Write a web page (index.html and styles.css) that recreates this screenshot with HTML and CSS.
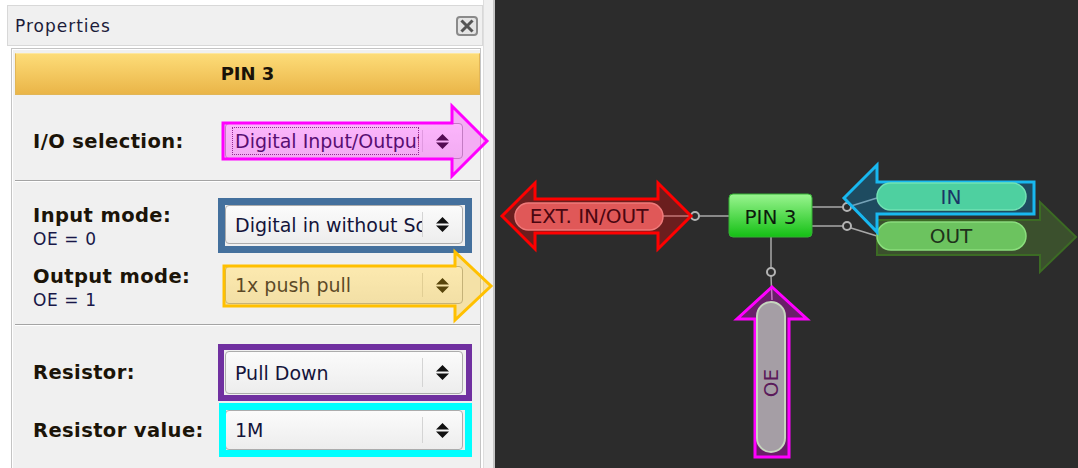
FILE: index.html
```html
<!DOCTYPE html>
<html lang="en">
<head>
    <meta charset="UTF-8">
    <title>Pin Properties</title>
    <link rel="stylesheet" href="styles.css">
</head>
<body>
    <div class="app">
        <!-- Properties dock -->
        <aside class="sidebar">
            <div class="dock-title">
                <span>Properties</span>
                <svg class="close" width="22" height="20" viewBox="0 0 22 20">
                    <rect x="1" y="1" width="20" height="18" rx="3" fill="#e4e4e4" stroke="#8a8a8a" stroke-width="2"/>
                    <path d="M6.5 5.5 L15.5 14.5 M15.5 5.5 L6.5 14.5" stroke="#555" stroke-width="3" stroke-linecap="square"/>
                </svg>
            </div>

            <div class="props">
                <div class="pin-head">PIN 3</div>

                <div class="group g1">
                    <div class="row">
                        <div class="label"><b>I/O selection:</b></div>
                        <div class="select h36">
                            <span class="value focus">Digital Input/Output</span>
                            <span class="spin"><svg width="13" height="15" viewBox="0 0 13 15"><path d="M0 6.5 L6.5 0 L13 6.5 Z M0 8.5 L6.5 15 L13 8.5 Z" fill="#111"/></svg></span>
                            <svg class="mark"><polygon points="-3,-1 226,-1 226,-18 261,17 226,52 226,35 -3,35" fill="rgba(255,0,255,0.28)" stroke="#ff00ff" stroke-width="3"/></svg>
                        </div>
                    </div>
                </div>

                <div class="group g2">
                    <div class="row r39">
                        <div class="label"><b>Input mode:</b><span>OE = 0</span></div>
                        <div class="select h39 box box-blue">
                            <span class="value">Digital in without Schmitt trigger</span>
                            <span class="spin"><svg width="13" height="15" viewBox="0 0 13 15"><path d="M0 6.5 L6.5 0 L13 6.5 Z M0 8.5 L6.5 15 L13 8.5 Z" fill="#111"/></svg></span>
                        </div>
                    </div>
                    <div class="row r38">
                        <div class="label"><b>Output mode:</b><span>OE = 1</span></div>
                        <div class="select h38">
                            <span class="value">1x push pull</span>
                            <span class="spin"><svg width="13" height="15" viewBox="0 0 13 15"><path d="M0 6.5 L6.5 0 L13 6.5 Z M0 8.5 L6.5 15 L13 8.5 Z" fill="#111"/></svg></span>
                            <svg class="mark"><polygon points="-2,-1 229,-1 229,-15 265,19 229,53 229,39 -2,39" fill="rgba(255,192,0,0.3)" stroke="#ffc000" stroke-width="3"/></svg>
                        </div>
                    </div>
                </div>

                <div class="group g3">
                    <div class="row">
                        <div class="label"><b>Resistor:</b></div>
                        <div class="select h43 box box-purple">
                            <span class="value">Pull Down</span>
                            <span class="spin"><svg width="13" height="15" viewBox="0 0 13 15"><path d="M0 6.5 L6.5 0 L13 6.5 Z M0 8.5 L6.5 15 L13 8.5 Z" fill="#111"/></svg></span>
                        </div>
                    </div>
                    <div class="row">
                        <div class="label"><b>Resistor value:</b></div>
                        <div class="select h40 box box-cyan">
                            <span class="value">1M</span>
                            <span class="spin"><svg width="13" height="15" viewBox="0 0 13 15"><path d="M0 6.5 L6.5 0 L13 6.5 Z M0 8.5 L6.5 15 L13 8.5 Z" fill="#111"/></svg></span>
                        </div>
                    </div>
                </div>
            </div>
        </aside>

        <div class="splitter"></div>

        <!-- Block diagram -->
        <main class="canvas">
            <svg class="diagram" width="583" height="468" viewBox="0 0 583 468">
                <defs>
                    <linearGradient id="green" x1="0" y1="0" x2="0" y2="1">
                        <stop offset="0" stop-color="#9af590"/>
                        <stop offset="1" stop-color="#14c014"/>
                    </linearGradient>
                </defs>

                <!-- wires -->
                <g class="wire">
                    <line x1="204" y1="216" x2="234" y2="216"/>
                    <line x1="317" y1="207" x2="348" y2="207"/>
                    <line x1="317" y1="226" x2="348" y2="226"/>
                    <line x1="356" y1="206" x2="382" y2="198"/>
                    <line x1="356" y1="228" x2="382" y2="236"/>
                    <line x1="276" y1="237" x2="276" y2="268"/>
                    <line x1="276" y1="276" x2="277" y2="300"/>
                    <line x1="168" y1="216" x2="196" y2="216"/>
                </g>
                <g class="pin">
                    <circle cx="200" cy="216" r="4"/>
                    <circle cx="352" cy="207" r="4"/>
                    <circle cx="352" cy="226" r="4"/>
                    <circle cx="276" cy="272" r="4"/>
                </g>

                <!-- EXT. IN/OUT -->
                <polygon points="7,216 40,183 40,199 163,199 163,183 196,216 163,249 163,233 40,233 40,249" fill="rgba(255,0,0,0.3)" stroke="#ff0000" stroke-width="3"/>
                <rect x="20" y="203" width="148" height="27" rx="13.5" fill="#e05858" stroke="#f07a7a" stroke-width="1.5"/>
                <text class="lbl" x="94" y="223" fill="#4a0610">EXT. IN/OUT</text>

                <!-- PIN 3 -->
                <rect x="234" y="194" width="83" height="43" rx="4" fill="url(#green)" stroke="#34b034" stroke-width="1"/>
                <text class="lbl" x="275.5" y="224" fill="#0c1a0c">PIN 3</text>

                <!-- OUT -->
                <polygon points="382,220 545,220 545,202 581,237 545,272 545,255 382,255" fill="rgba(90,150,50,0.35)" stroke="#3c6b24" stroke-width="2"/>
                <rect x="382" y="222" width="149" height="28" rx="14" fill="#6cc35f" stroke="#8ade7c" stroke-width="1.5"/>
                <text class="lbl" x="456" y="243" font-size="19" fill="#1e321a">OUT</text>

                <!-- IN -->
                <polygon points="349,198 382,165 382,182 539,182 539,214 382,214 382,232" fill="rgba(0,150,220,0.3)" stroke="#18b8f0" stroke-width="3"/>
                <rect x="382" y="183" width="149" height="27" rx="13.5" fill="#4ed0a0" stroke="#72e2b4" stroke-width="1.5"/>
                <text class="lbl" x="456" y="204" fill="#1a3566">IN</text>

                <!-- OE -->
                <polygon points="277,287 312,319 294,319 294,457 260,457 260,319 242,319" fill="rgba(255,0,255,0.29)" stroke="#ff00ff" stroke-width="3"/>
                <rect x="262" y="302" width="28" height="150" rx="14" fill="#a59ea5" stroke="#c6d6be" stroke-width="2"/>
                <text class="lbl" x="0" y="0" font-size="18" fill="#5a1a5a" transform="translate(283 383) rotate(-90)">OE</text>
            </svg>
        </main>
    </div>
</body>
</html>
```

FILE: styles.css
```css
body {
    margin: 0;
    background: #fff;
    font-family: "DejaVu Sans", sans-serif;
}

.app {
    display: flex;
    height: 468px;
    overflow: hidden;
}

.sidebar {
    flex: none;
    width: 476px;
    padding: 5px 0 0 7px;
}

.splitter {
    flex: none;
    width: 9px;
    background: #f0f0f0;
    border-left: 1px solid #dedede;
    border-right: 2px solid #c6c6c6;
}

.canvas {
    flex: 1;
    background: #2c2c2c;
}

.diagram {
    display: block;
}

.wire line {
    stroke: #a8a8a8;
    stroke-width: 1.5;
}

.pin circle {
    fill: none;
    stroke: #b4b4b4;
    stroke-width: 2;
}

.lbl {
    font-family: "DejaVu Sans", sans-serif;
    font-size: 20px;
    text-anchor: middle;
}

/* dock title */
.dock-title {
    height: 41px;
    box-sizing: border-box;
    border: 1px solid #d8d8d8;
    background: #f0f0f0;
    display: flex;
    align-items: center;
    justify-content: space-between;
    padding: 0 4px 0 7px;
    font-size: 17px;
    letter-spacing: 1px;
    color: #1c1c3a;
}

.close {
    display: block;
}

/* property sheet */
.props {
    margin: 2px 0 0 4px;
    width: 470px;
    height: 430px;
    box-sizing: border-box;
    border: 1px solid #c4c4c4;
    border-bottom: 0;
    padding: 4px 0 0 3px;
    background: #f0f0f0;
    box-shadow: inset 1px 1px 0 #fff;
}

.pin-head {
    height: 42px;
    box-sizing: border-box;
    border: 1px solid #e2b656;
    border-top-color: #fde7a0;
    background: linear-gradient(#fddc78, #eab548);
    text-align: center;
    line-height: 40px;
    font-weight: bold;
    font-size: 18px;
    color: #1a1208;
}

.group {
    border-bottom: 1px solid #a4a4a4;
    box-shadow: 0 1px 0 #fff;
    display: flex;
    flex-direction: column;
}

.g1 {
    padding: 28px 0 21px;
}

.g2 {
    padding: 24px 0 20px;
    gap: 22px;
}

.g3 {
    padding: 26px 0 0;
    gap: 16px;
    border-bottom: 0;
    box-shadow: none;
}

.row {
    display: flex;
    align-items: center;
}

.r39 { height: 39px; }
.r38 { height: 38px; }

.label {
    width: 210px;
    padding-left: 18px;
    box-sizing: border-box;
    display: flex;
    flex-direction: column;
    color: #1b1408;
}

.r39 .label,
.r38 .label {
    margin-top: 4px;
}

.label b {
    font-size: 19.5px;
    line-height: 21px;
    letter-spacing: 0.4px;
}

.label span {
    font-size: 17px;
    line-height: 18px;
    margin-top: 4px;
    letter-spacing: 0.6px;
    color: #181848;
}

/* combo boxes */
.select {
    position: relative;
    width: 238px;
    box-sizing: border-box;
    border: 1px solid #acacac;
    border-radius: 4px;
    background: linear-gradient(#fbfbfb, #ededed);
    display: flex;
    align-items: center;
    font-size: 19px;
    color: #14143a;
}

.h36 { height: 36px; }
.h38 { height: 38px; }
.h39 { height: 39px; }
.h40 { height: 40px; }
.h43 { height: 43px; }

.value {
    flex: 1;
    min-width: 0;
    padding-left: 9px;
    overflow: hidden;
    white-space: nowrap;
}

.value.focus {
    margin: 0 3px 0 6px;
    padding: 3px 0 3px 3px;
    outline: 1px dotted #6a3a6a;
    outline-offset: -1px;
}

.spin {
    flex: none;
    width: 39px;
    align-self: stretch;
    margin: 6px 0;
    border-left: 1px solid #d4d4d4;
    display: flex;
    align-items: center;
    justify-content: center;
}

.spin svg {
    display: block;
}

/* annotation overlays */
.mark {
    position: absolute;
    left: 0;
    top: 0;
    width: 100%;
    height: 100%;
    overflow: visible;
    pointer-events: none;
}

.box::before {
    content: "";
    position: absolute;
    top: -8px;
    left: -8px;
    right: -10px;
    bottom: -8px;
    border: 7px solid;
    pointer-events: none;
}

.box-blue::before {
    border-color: #44709d;
    bottom: -10px;
}

.box-purple::before {
    border-color: #7030a0;
    border-width: 6px;
}

.box-cyan::before {
    border-color: #00ffff;
    left: -7px;
}
```
